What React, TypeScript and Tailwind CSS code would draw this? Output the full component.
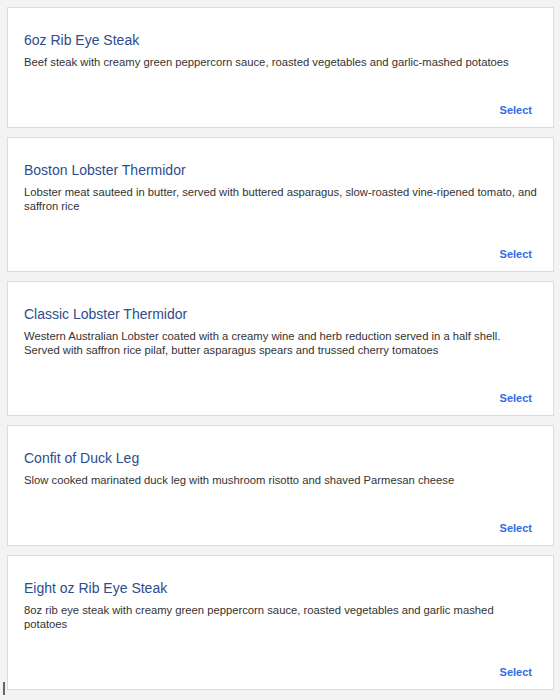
import React from 'react';

type Dish = {
  name: string;
  description: string;
};

const dishes: Dish[] = [
  {
    name: '6oz Rib Eye Steak',
    description: 'Beef steak with creamy green peppercorn sauce, roasted vegetables and garlic-mashed potatoes',
  },
  {
    name: 'Boston Lobster Thermidor',
    description:
      'Lobster meat sauteed in butter, served with buttered asparagus, slow-roasted vine-ripened tomato, and saffron rice',
  },
  {
    name: 'Classic Lobster Thermidor',
    description:
      'Western Australian Lobster coated with a creamy wine and herb reduction served in a half shell. Served with saffron rice pilaf, butter asparagus spears and trussed cherry tomatoes',
  },
  {
    name: 'Confit of Duck Leg',
    description: 'Slow cooked marinated duck leg with mushroom risotto and shaved Parmesan cheese',
  },
  {
    name: 'Eight oz Rib Eye Steak',
    description: '8oz rib eye steak with creamy green peppercorn sauce, roasted vegetables and garlic mashed potatoes',
  },
];

function DishCard({ dish }: { dish: Dish }) {
  return (
    <div className="bg-white border border-[#dcdcdc] pt-[23px] pb-[10px] pl-4 pr-4">
      <h2 className="text-[14px] leading-[18px] text-[#2d4d8c] font-normal">{dish.name}</h2>
      <p className="mt-[6px] text-[11.25px] leading-[14px] text-[#333]">{dish.description}</p>
      <div className="mt-[34px] flex justify-end pr-[5px]">
        <button className="text-[11px] leading-[14px] font-bold text-[#2f6de1]">Select</button>
      </div>
    </div>
  );
}

export default function App() {
  return (
    <div
      className="relative min-h-[700px] bg-[#f3f3f3] pl-[7px] pr-[6px] pt-[7px] pb-3"
      style={{ fontFamily: '"Liberation Sans", Arial, sans-serif' }}
    >
      <div className="flex flex-col gap-[9px]">
        {dishes.map((d) => (
          <DishCard key={d.name} dish={d} />
        ))}
      </div>
      <div className="absolute left-[3px] top-[682px] w-[2px] h-[13px] bg-[#666]" />
    </div>
  );
}
